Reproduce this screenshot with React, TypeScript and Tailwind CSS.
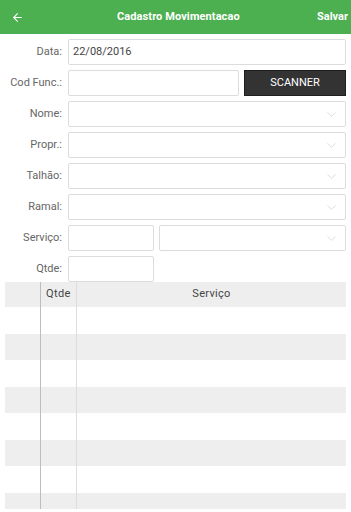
import { ArrowLeft, ChevronDown } from "lucide-react";

const font = { fontFamily: "Roboto, 'Liberation Sans', sans-serif" };

function Label({ text }: { text: string }) {
  return <div className="w-[63px] shrink-0 pr-px text-right text-[11px] text-[#666]">{text}</div>;
}

function Box({ value, className = "" }: { value?: string; className?: string }) {
  return (
    <div className={`flex h-full items-center rounded-[2px] border border-[#dcdcdc] bg-white px-[4px] text-[11px] text-[#444] ${className}`}>
      {value}
    </div>
  );
}

function Select({ className = "" }: { className?: string }) {
  return (
    <div className={`flex h-full items-center justify-end rounded-[2px] border border-[#dcdcdc] bg-white pr-[6px] ${className}`}>
      <ChevronDown className="h-[15px] w-[15px] text-[#cfcfcf]" strokeWidth={1.1} />
    </div>
  );
}

const tableRows = [false, true, false, true, false, true, false, true];

export default function App() {
  return (
    <div className="h-[512px] w-[351px] overflow-hidden bg-white" style={font}>
      {/* Toolbar */}
      <div className="flex h-[34px] items-center bg-[#4caf50] text-white">
        <div className="flex w-[36px] items-center pl-[11px]">
          <ArrowLeft className="h-[13px] w-[13px]" strokeWidth={2} />
        </div>
        <div className="flex-1 pl-[81px] text-[11px] font-bold tracking-[0.1px]">Cadastro Movimentacao</div>
        <div className="pr-[3px] text-[11px] font-bold">Salvar</div>
      </div>

      {/* Form */}
      <div className="flex flex-col gap-[5px] pl-0 pr-[5px] pt-[5px]">
        <div className="flex h-[26px] items-center gap-[5px]">
          <Label text="Data:" />
          <Box value="22/08/2016" className="flex-1" />
        </div>
        <div className="flex h-[26px] items-center gap-[5px]">
          <Label text="Cod Func.:" />
          <Box className="w-[171px]" />
          <div className="flex h-full flex-1 items-center justify-center border border-[#1e1e1e] bg-[#333] text-[11px] text-white">
            SCANNER
          </div>
        </div>
        {["Nome:", "Propr.:", "Talhão:", "Ramal:"].map((l) => (
          <div key={l} className="flex h-[26px] items-center gap-[5px]">
            <Label text={l} />
            <Select className="flex-1" />
          </div>
        ))}
        <div className="flex h-[26px] items-center gap-[5px]">
          <Label text="Serviço:" />
          <Box className="w-[86px]" />
          <Select className="flex-1" />
        </div>
        <div className="flex h-[26px] items-center gap-[5px]">
          <Label text="Qtde:" />
          <Box className="w-[86px]" />
        </div>
      </div>

      {/* Table */}
      <div className="mx-[5px] h-[227px] overflow-hidden">
        <div className="flex h-[25px] items-center bg-[#eeeeee] text-[11px] text-[#444]">
          <div className="h-full w-[36px] border-r border-[#bdbdbd]" />
          <div className="flex h-full w-[36px] items-center border-r border-[#dddddd] pl-[5px] tracking-[0.4px]">Qtde</div>
          <div className="flex-1 text-center tracking-[0.3px]">Serviço</div>
        </div>
        {tableRows.map((gray, i) => (
          <div key={i} className={`flex h-[26.5px] ${gray ? "bg-[#eeeeee]" : "bg-white"}`}>
            <div className="h-full w-[36px] border-r border-[#bdbdbd]" />
            <div className="h-full w-[36px] border-r border-[#dddddd]" />
            <div className="flex-1" />
          </div>
        ))}
      </div>
    </div>
  );
}
